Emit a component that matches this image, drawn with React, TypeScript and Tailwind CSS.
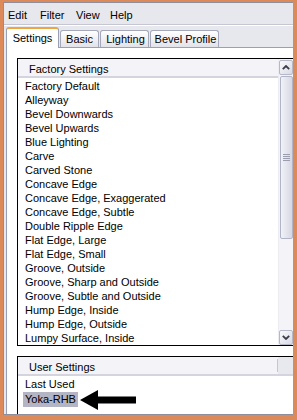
const factory = [
  "Factory Default",
  "Alleyway",
  "Bevel Downwards",
  "Bevel Upwards",
  "Blue Lighting",
  "Carve",
  "Carved Stone",
  "Concave Edge",
  "Concave Edge, Exaggerated",
  "Concave Edge, Subtle",
  "Double Ripple Edge",
  "Flat Edge, Large",
  "Flat Edge, Small",
  "Groove, Outside",
  "Groove, Sharp and Outside",
  "Groove, Subtle and Outside",
  "Hump Edge, Inside",
  "Hump Edge, Outside",
  "Lumpy Surface, Inside",
];

function ScrollButton({ up }: { up: boolean }) {
  return (
    <div className="h-[15px] w-[14px] border border-[#b4b8c8] rounded-[2px] bg-gradient-to-br from-[#fbfbfd] to-[#d8d9e4] flex items-center justify-center">
      <svg width="8" height="5" viewBox="0 0 8 5">
        {up ? (
          <polyline points="0.8,4.2 4,1 7.2,4.2" fill="none" stroke="#3b3d4a" strokeWidth="1.8" />
        ) : (
          <polyline points="0.8,0.8 4,4 7.2,0.8" fill="none" stroke="#3b3d4a" strokeWidth="1.8" />
        )}
      </svg>
    </div>
  );
}

export default function App() {
  return (
    <div className="w-[297px] h-[420px] bg-[#dc8a5a] pt-[2px] pl-[3px] pr-[4px] pb-[5px] overflow-hidden font-['Liberation_Sans',Arial,sans-serif] text-[11px] text-black">
      <div className="h-full flex flex-col bg-[#e7e7ee] border-t border-l border-b border-[#8e8e9c] overflow-hidden">
        {/* menu bar */}
        <div className="h-[22px] flex items-center pl-[4px] pt-[3px] shrink-0 border-b border-[#c6c6d2]">
          <span className="w-[32px]">Edit</span>
          <span className="w-[36px]">Filter</span>
          <span className="w-[34px]">View</span>
          <span>Help</span>
        </div>
        {/* tab row */}
        <div className="h-[22px] flex items-end pl-[2px] shrink-0 border-t border-white">
          <div className="relative z-10 -mb-px h-[21px] w-[53px] bg-white border border-b-0 border-[#9aa0b4] rounded-t-[3px] border-t-2 border-t-[#eca742] flex items-center justify-center">
            Settings
          </div>
          <div className="h-[17px] w-[39px] ml-px bg-gradient-to-b from-white to-[#e2e2ea] border border-b-0 border-[#a4a8b8] rounded-t-[3px] flex items-center justify-center">
            Basic
          </div>
          <div className="h-[17px] w-[49px] ml-px bg-gradient-to-b from-white to-[#e2e2ea] border border-b-0 border-[#a4a8b8] rounded-t-[3px] flex items-center justify-center pl-[2px]">
            Lighting
          </div>
          <div className="h-[17px] w-[69px] ml-px bg-gradient-to-b from-white to-[#e2e2ea] border border-b-0 border-[#a4a8b8] rounded-t-[3px] flex items-center justify-center pl-[2px]">
            Bevel Profile
          </div>
        </div>
        {/* panel */}
        <div className="flex-1 min-h-0 ml-[2px] bg-white border-t border-l border-[#9aa0b4] pt-[10px] pl-[10px] flex flex-col overflow-hidden">
          {/* Factory settings box */}
          <div className="w-[276px] h-[288px] shrink-0 border-t border-l border-b border-black flex">
            <div className="flex-1 flex flex-col">
              <div className="h-[19px] shrink-0 bg-[#f3f3f8] border-b-2 border-[#d3d4de] pl-[11px] pt-[3px] leading-[14px]">
                Factory Settings
              </div>
              <div className="flex flex-col pt-[1px]">
                {factory.map((f) => (
                  <div key={f} className="h-[14px] leading-[14px] pl-[7px] whitespace-nowrap">
                    {f}
                  </div>
                ))}
              </div>
            </div>
            {/* scrollbar */}
            <div className="w-[15px] shrink-0 bg-[#f3f3f8] border-l border-[#ececf2] flex flex-col items-center pt-[1px]">
              <ScrollButton up />
              <div className="mt-[1px] h-[163px] w-[13px] border border-[#b0b4c6] rounded-[2px] bg-gradient-to-r from-[#f2f2f8] to-[#d6d7e3] flex flex-col items-center justify-center gap-[1px]">
                <div className="w-[7px] h-px bg-[#9a9caf]" />
                <div className="w-[7px] h-px bg-[#9a9caf]" />
                <div className="w-[7px] h-px bg-[#9a9caf]" />
                <div className="w-[7px] h-px bg-[#9a9caf]" />
              </div>
              <div className="flex-1" />
              <ScrollButton up={false} />
            </div>
          </div>
          {/* User settings box */}
          <div className="w-[276px] flex-1 mt-[10px] border-t border-l border-black flex flex-col">
            <div className="h-[19px] shrink-0 bg-[#f3f3f8] border-b-2 border-[#d3d4de] flex items-center">
              <div className="flex-1 pl-[11px] pt-[3px] leading-[14px] self-stretch">User Settings</div>
              <div className="w-px h-[13px] bg-[#c4c6d2]" />
              <div className="w-[15px] self-stretch bg-[#e8e8ef]" />
            </div>
            <div className="h-[15px] leading-[15px] pl-[7px] mt-px">Last Used</div>
            <div className="h-[15px] flex items-center pl-[5px]">
              <span className="bg-[#b3b4c4] px-[2px] leading-[15px]">Yoka-RHB</span>
              <svg width="56" height="20" viewBox="0 0 56 20" className="ml-[2px]">
                <polygon points="0,10 18,0 18,6.5 56,6.5 56,13.5 18,13.5 18,20" fill="#000" />
              </svg>
            </div>
          </div>
        </div>
      </div>
    </div>
  );
}
